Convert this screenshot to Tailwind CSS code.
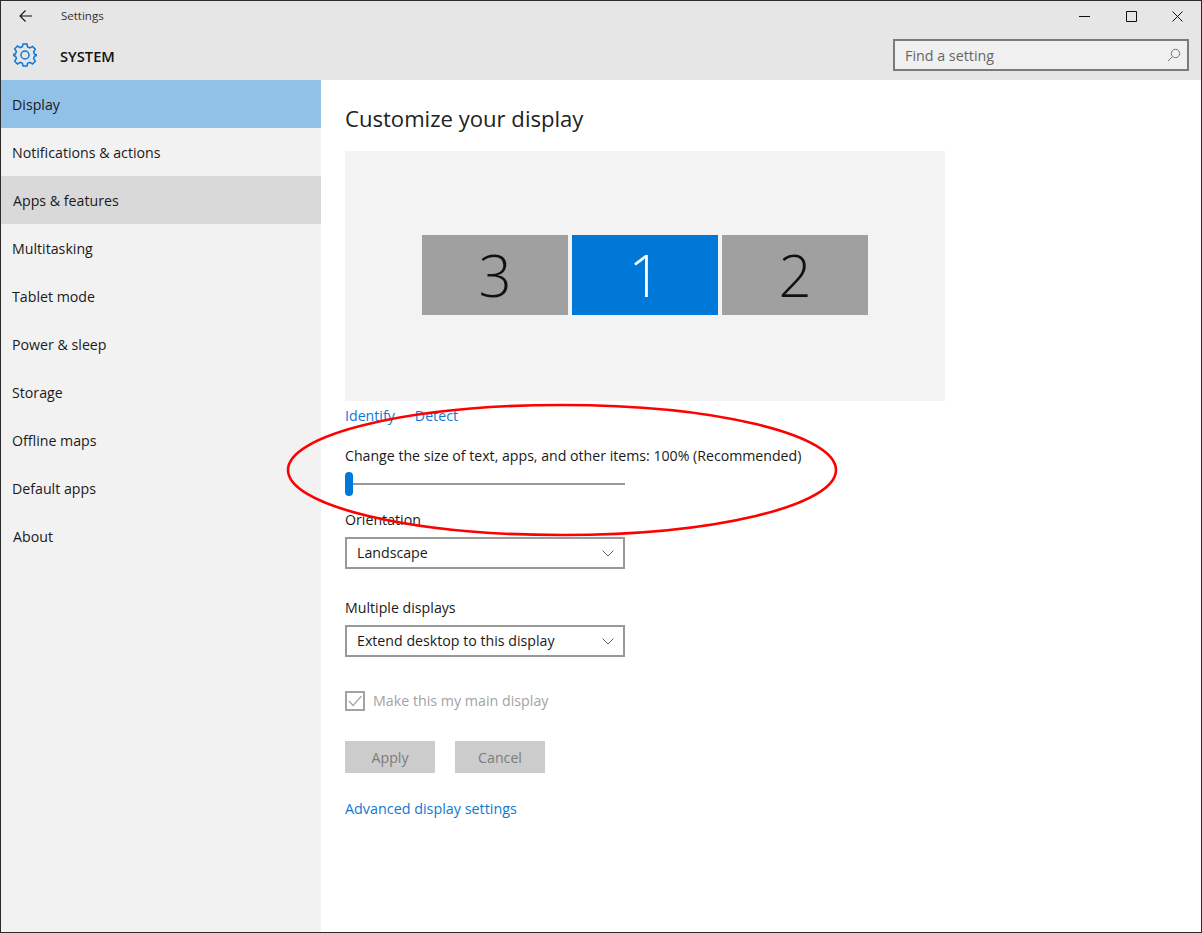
<!DOCTYPE html>
<html lang="en">
<head>
    <meta charset="UTF-8">
    <title>Settings</title>
    <script src="https://cdn.jsdelivr.net/npm/@tailwindcss/browser@4"></script>
</head>
<body class="bg-white">
    <div class="relative w-[1202px] h-[933px] overflow-hidden border border-[#2b2b2b] flex flex-col font-['Open_Sans',sans-serif] text-[14.2px] text-[#1a1a1a]">
        <!-- Title bar -->
        <div class="h-[79px] shrink-0 bg-[#e6e6e6] flex flex-col">
            <div class="h-[30px] flex items-center">
                <svg class="ml-[18px] w-[13px] h-[12px]" viewBox="0 0 13 12" fill="none" stroke="#111" stroke-width="1.1"><path d="M13 6H1M6.5.5 1 6l5.5 5.5"/></svg>
                <span class="ml-[29px] text-[11.5px] text-[#333]">Settings</span>
                <div class="ml-auto flex items-center">
                    <svg class="w-[11px] h-[11px] mr-[36px]" viewBox="0 0 11 11" stroke="#111"><path d="M0 5.5h11"/></svg>
                    <svg class="w-[11px] h-[11px] mr-[35px]" viewBox="0 0 11 11" fill="none" stroke="#111"><path d="M.5.5h10v10H.5z"/></svg>
                    <svg class="w-[11px] h-[11px] mr-[18px]" viewBox="0 0 11 11" stroke="#111"><path d="M.5.5l10 10M10.5.5l-10 10"/></svg>
                </div>
            </div>
            <div class="flex-1 flex items-center pb-[1px]">
                <svg class="ml-[12px] w-[24px] h-[24px]" viewBox="0 0 24 24" fill="none" stroke="#0f78d4" stroke-width="1.5"><circle cx="12" cy="12" r="4"/><path d="M10 1h4l.6 3 2.2 1 2.7-1.6 2.8 2.8L20.600 9l.9 2.200 2.500.6v.4l0 0 0 .4-2.500.6-.9 2.200 1.700 2.800-2.800 2.800-2.700-1.600-2.200.9L14 23h-4l-.6-2.700-2.200-.9-2.700 1.600-2.800-2.800L3.400 15.400l-.9-2.200L0 12.600v-1.200l2.500-.6.9-2.200-1.700-2.800 2.800-2.800 2.700 1.600 2.200-1z"/></svg>
                <span class="ml-[23px] mt-[2px] text-[14.7px] font-semibold text-[#111]">SYSTEM</span>
                <div class="ml-auto mr-[12px] w-[296px] h-[32px] border-2 border-[#7a7a7a] bg-[#f0f0f0] flex items-center pl-[10px] pr-[6px]">
                    <span class="mt-[1px] text-[14.3px] text-[#666]">Find a setting</span>
                    <svg class="ml-auto w-[14px] h-[14px]" viewBox="0 0 14 14" fill="none" stroke="#777"><circle cx="8.500" cy="5.500" r="4.200"/><path d="M5.500 8.500 1 13"/></svg>
                </div>
            </div>
        </div>
        <div class="flex-1 flex min-h-0">
            <!-- Sidebar -->
            <nav class="w-[320px] shrink-0 bg-[#f2f2f2] flex flex-col">
                <div class="h-[48px] flex items-center pt-[2px] pl-[11px] bg-[#91c1e7]">Display</div>
                <div class="h-[48px] flex items-center pt-[2px] pl-[11px]">Notifications &amp; actions</div>
                <div class="h-[48px] flex items-center pt-[2px] pl-[12px] bg-[#d9d9d9]">Apps &amp; features</div>
                <div class="h-[48px] flex items-center pt-[2px] pl-[11px]">Multitasking</div>
                <div class="h-[48px] flex items-center pt-[2px] pl-[11px]">Tablet mode</div>
                <div class="h-[48px] flex items-center pt-[2px] pl-[11px]">Power &amp; sleep</div>
                <div class="h-[48px] flex items-center pt-[2px] pl-[11px]">Storage</div>
                <div class="h-[48px] flex items-center pt-[2px] pl-[11px]">Offline maps</div>
                <div class="h-[48px] flex items-center pt-[2px] pl-[11px]">Default apps</div>
                <div class="h-[48px] flex items-center pt-[2px] pl-[12px]">About</div>
            </nav>
            <!-- Content -->
            <main class="flex-1 pl-[24px] flex flex-col items-start">
                <h1 class="mt-[20px] h-[36px] leading-[36px] text-[22.1px] text-[#222]">Customize your display</h1>
                <div class="mt-[15px] w-[600px] h-[250px] bg-[#f3f3f3] flex items-center justify-center gap-[4px] pb-[2px]">
                    <div class="w-[146px] h-[80px] bg-[#a0a0a0] flex items-center justify-center text-[58px] font-light leading-none text-[#111]">3</div>
                    <div class="w-[146px] h-[80px] bg-[#0078d7] flex items-center justify-center text-[58px] font-light leading-none text-white">1</div>
                    <div class="w-[146px] h-[80px] bg-[#a0a0a0] flex items-center justify-center text-[58px] font-light leading-none text-[#111]">2</div>
                </div>
                <div class="mt-[4px] h-[20px] flex items-center pt-[2px] gap-[20px] text-[#0f78d4]">
                    <span>Identify</span>
                    <span>Detect</span>
                </div>
                <div class="mt-[20px] h-[20px] flex items-center pt-[2px] text-[14.15px]">Change the size of text, apps, and other items: 100% (Recommended)</div>
                <div class="relative mt-[7px] w-[280px] h-[24px] flex items-center">
                    <div class="w-full h-[2px] bg-[#999]"></div>
                    <div class="absolute left-0 top-0 w-[8px] h-[24px] rounded-full bg-[#0078d7]"></div>
                </div>
                <div class="mt-[13px] h-[20px] flex items-center pt-[2px]">Orientation</div>
                <div class="mt-[8px] w-[280px] h-[32px] border-2 border-[#999] flex items-center pl-[10px] pr-[9px]">
                    <span class="mb-[1px]">Landscape</span>
                    <svg class="ml-auto w-[12px] h-[7px]" viewBox="0 0 12 7" fill="none" stroke="#666"><path d="M.5.5 6 6 11.500.5"/></svg>
                </div>
                <div class="mt-[28px] h-[20px] flex items-center pt-[2px]">Multiple displays</div>
                <div class="mt-[8px] w-[280px] h-[32px] border-2 border-[#999] flex items-center pl-[10px] pr-[9px]">
                    <span class="mb-[1px]">Extend desktop to this display</span>
                    <svg class="ml-auto w-[12px] h-[7px]" viewBox="0 0 12 7" fill="none" stroke="#666"><path d="M.5.5 6 6 11.500.5"/></svg>
                </div>
                <div class="mt-[33px] flex items-center gap-[8px] text-[#a3a3a3]">
                    <div class="w-[20px] h-[20px] border-2 border-[#a3a3a3] flex items-center justify-center">
                        <svg class="w-[14px] h-[12px]" viewBox="0 0 14 12" fill="none" stroke="#a3a3a3" stroke-width="1.200"><path d="M1 6l4 4.500L13.500 1"/></svg>
                    </div>
                    <span class="text-[14.25px]">Make this my main display</span>
                </div>
                <div class="mt-[30px] flex gap-[20px] text-[#7c7c7c]">
                    <div class="w-[90px] h-[32px] bg-[#cccccc] flex items-center justify-center">Apply</div>
                    <div class="w-[90px] h-[32px] bg-[#cccccc] flex items-center justify-center">Cancel</div>
                </div>
                <div class="mt-[25px] h-[20px] flex items-center text-[14.35px] text-[#0f78d4]">Advanced display settings</div>
            </main>
        </div>
        <!-- Red annotation -->
        <svg class="absolute left-[-1px] top-[-1px] w-[1202px] h-[933px] pointer-events-none" viewBox="0 0 1202 933" fill="none"><ellipse cx="562" cy="470" rx="274" ry="65" stroke="#ff0000" stroke-width="2.600"/></svg>
    </div>
</body>
</html>
